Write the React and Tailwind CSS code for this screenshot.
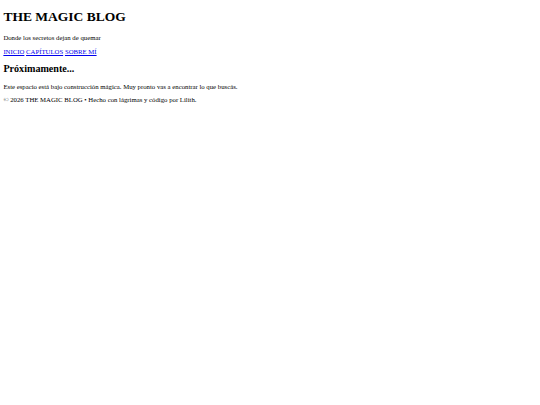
import React from 'react';

// Unstyled-looking page, rendered at 0.421875 of a 1280px viewport
const App = () => {
  return (
    <div className="px-[3.375px] pb-[3.375px] font-['Liberation_Serif',serif] text-[6.75px] leading-[normal] text-black bg-white">
      <header>
        <h1 className="text-[13.5px] font-bold my-[0.67em]">THE MAGIC BLOG</h1>
        <p className="my-[1em]">Donde los secretos dejan de quemar</p>
        <nav>
          <a href="#" className="text-[#0000ee] underline">INICIO</a>{' '}
          <a href="#" className="text-[#0000ee] underline">CAPÍTULOS</a>{' '}
          <a href="#" className="text-[#0000ee] underline">SOBRE MÍ</a>
        </nav>
      </header>
      <main>
        <h2 className="text-[10.125px] font-bold my-[0.83em]">Próximamente...</h2>
        <p className="my-[1em]">Este espacio está bajo construcción mágica. Muy pronto vas a encontrar lo que buscás.</p>
      </main>
      <footer>
        <p className="my-[1em]">© 2026 THE MAGIC BLOG • Hecho con lágrimas y código por Lilith.</p>
      </footer>
    </div>
  );
};

export default App;
